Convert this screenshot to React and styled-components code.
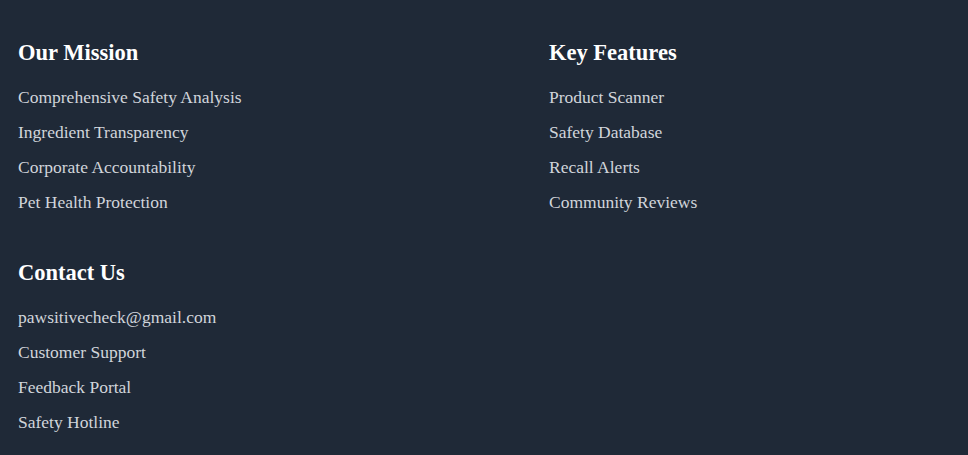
import React from 'react';
import styled, { createGlobalStyle } from 'styled-components';

const GlobalStyle = createGlobalStyle`
  html, body {
    margin: 0;
    padding: 0;
    background: #1f2937;
  }
  body {
    font-family: "Liberation Serif", "Times New Roman", serif;
  }
`;

const Footer = styled.footer`
  background: #1f2937;
  min-height: 455px;
  box-sizing: border-box;
  padding: 40px 18px 23px;
  display: grid;
  grid-template-columns: 531px 1fr;
  row-gap: 48px;
`;

const Section = styled.div`
  display: flex;
  flex-direction: column;
`;

const Heading = styled.h3`
  margin: 0 0 22px;
  font-size: 22.5px;
  line-height: 25px;
  font-weight: 700;
  color: #ffffff;
`;

const LinkList = styled.ul`
  list-style: none;
  margin: 0;
  padding: 0;
  display: flex;
  flex-direction: column;
  gap: 15px;
`;

const LinkItem = styled.li`
  font-size: 17.5px;
  line-height: 20px;
  color: #d1d5db;
`;

const sections = [
  {
    title: 'Our Mission',
    items: [
      'Comprehensive Safety Analysis',
      'Ingredient Transparency',
      'Corporate Accountability',
      'Pet Health Protection',
    ],
  },
  {
    title: 'Key Features',
    items: ['Product Scanner', 'Safety Database', 'Recall Alerts', 'Community Reviews'],
  },
  {
    title: 'Contact Us',
    items: ['pawsitivecheck@gmail.com', 'Customer Support', 'Feedback Portal', 'Safety Hotline'],
  },
];

export default function App() {
  return (
    <>
      <GlobalStyle />
      <Footer>
        {sections.map((s) => (
          <Section key={s.title}>
            <Heading>{s.title}</Heading>
            <LinkList>
              {s.items.map((item) => (
                <LinkItem key={item}>{item}</LinkItem>
              ))}
            </LinkList>
          </Section>
        ))}
      </Footer>
    </>
  );
}
